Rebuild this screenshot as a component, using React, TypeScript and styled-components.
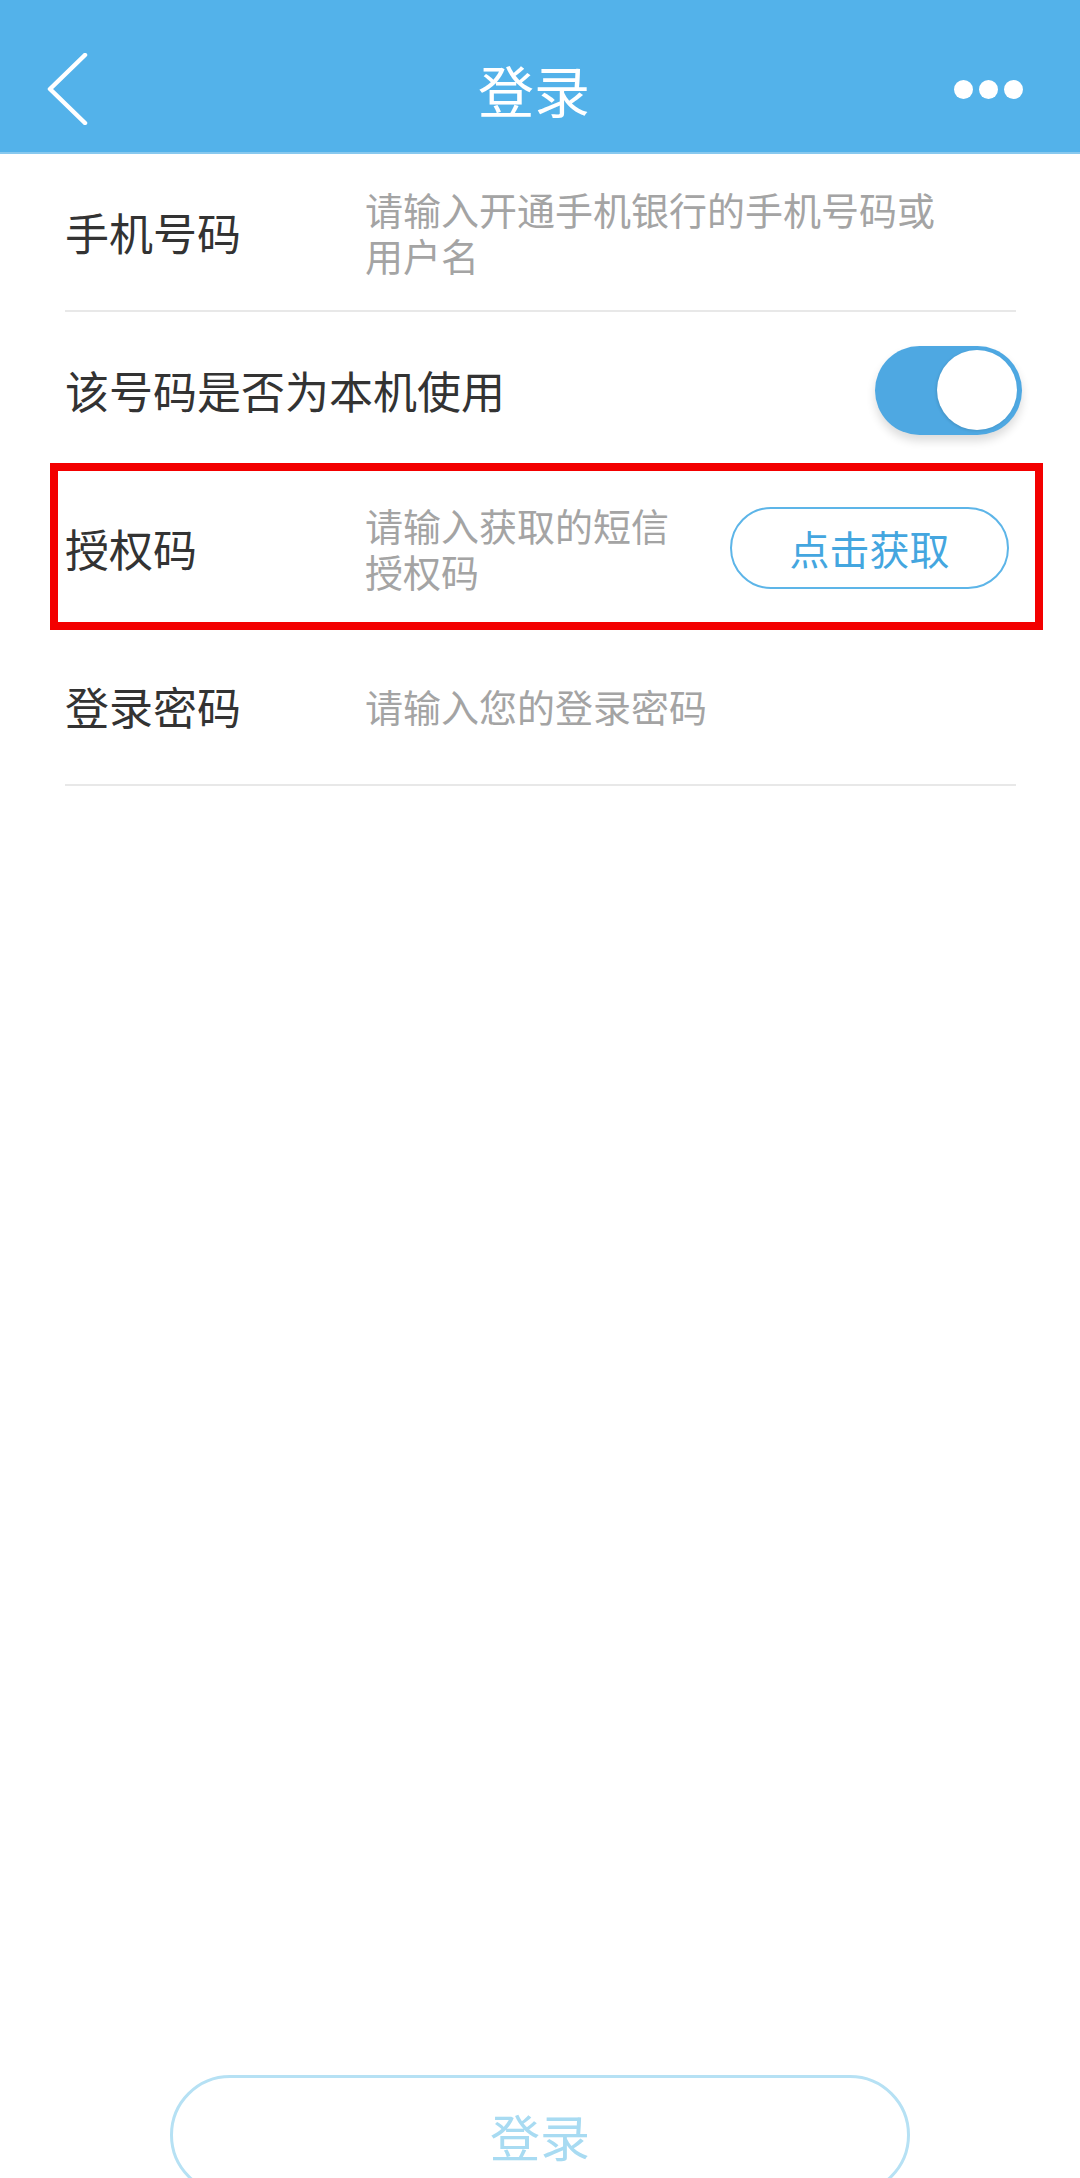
import styled, { createGlobalStyle } from 'styled-components';

const GlobalStyle = createGlobalStyle`
  html, body {
    margin: 0;
    padding: 0;
    background: #ffffff;
    overflow: hidden;
  }
  body {
    font-family: "Noto Sans CJK SC", "Noto Sans", sans-serif;
  }
`;

const Page = styled.div`
  width: 1080px;
  height: 2178px;
  display: flex;
  flex-direction: column;
  background: #ffffff;
  overflow: hidden;
`;

const Header = styled.header`
  flex-shrink: 0;
  height: 154px;
  box-sizing: border-box;
  padding: 26px 57px 0 45px;
  background: #53b2ea;
  border-bottom: 2px solid #88c9ef;
  display: grid;
  grid-template-columns: 120px 1fr 120px;
  align-items: center;
`;

const BackButton = styled.div`
  display: flex;
  align-items: center;
`;

const Title = styled.h1`
  margin: 0;
  text-align: center;
  color: #ffffff;
  font-size: 56px;
  font-weight: 400;
  line-height: 1;
`;

const Dots = styled.div`
  display: flex;
  justify-content: flex-end;
  gap: 6px;

  span {
    width: 19px;
    height: 19px;
    border-radius: 50%;
    background: #ffffff;
  }
`;

const Form = styled.div`
  flex-shrink: 0;
  display: flex;
  flex-direction: column;
`;

const Row = styled.div`
  position: relative;
  flex-shrink: 0;
  height: 158px;
  box-sizing: border-box;
  margin: 0 64px 0 65px;
  border-bottom: 2px solid #e8e8e8;
  display: flex;
  align-items: center;
`;

const Label = styled.div`
  min-width: 300px;
  flex-shrink: 0;
  white-space: nowrap;
  font-size: 44px;
  color: #333333;
  line-height: 1.2;
`;

const Hint = styled.div<{ $width?: number }>`
  width: ${(p) => (p.$width ? `${p.$width}px` : 'auto')};
  font-size: 38px;
  line-height: 46px;
  color: #a4a4a4;
`;

const Switch = styled.div`
  margin-left: auto;
  margin-right: -6px;
  width: 147px;
  height: 89px;
  flex-shrink: 0;
  box-sizing: border-box;
  padding: 0 5px;
  border-radius: 45px;
  background: #4ea8e2;
  box-shadow: 0 6px 10px rgba(0, 0, 0, 0.14);
  display: flex;
  align-items: center;
  justify-content: flex-end;
`;

const Knob = styled.div`
  width: 80px;
  height: 80px;
  border-radius: 50%;
  background: #ffffff;
  box-shadow: -1px 1px 3px rgba(0, 0, 0, 0.12);
`;

const FetchButton = styled.button`
  margin-left: auto;
  margin-right: 7px;
  width: 279px;
  height: 82px;
  flex-shrink: 0;
  border: 2.5px solid #5db5e8;
  border-radius: 41px;
  background: #ffffff;
  color: #44a6df;
  font-family: inherit;
  font-size: 40px;
  padding: 0;
`;

const Highlight = styled.div`
  position: absolute;
  top: -7px;
  bottom: -4px;
  left: -15px;
  right: -27px;
  border: 8px solid #f30000;
  pointer-events: none;
`;

const LoginButton = styled.button`
  margin: 1289px auto 0;
  width: 740px;
  height: 120px;
  flex-shrink: 0;
  border: 3px solid #b6e1f4;
  border-radius: 60px;
  background: #ffffff;
  color: #a8dbf2;
  font-family: inherit;
  font-size: 50px;
  padding: 0;
`;

const App = () => {
  return (
    <Page>
      <GlobalStyle />
      <Header>
        <BackButton>
          <svg width="44" height="72" viewBox="0 0 44 72" fill="none">
            <path d="M40 2 L5 36 L40 70" stroke="#ffffff" strokeWidth="4.5" strokeLinecap="round" strokeLinejoin="round" />
          </svg>
        </BackButton>
        <Title>登录</Title>
        <Dots>
          <span />
          <span />
          <span />
        </Dots>
      </Header>
      <Form>
        <Row>
          <Label>手机号码</Label>
          <Hint $width={590}>请输入开通手机银行的手机号码或用户名</Hint>
        </Row>
        <Row>
          <Label>该号码是否为本机使用</Label>
          <Switch>
            <Knob />
          </Switch>
        </Row>
        <Row>
          <Label>授权码</Label>
          <Hint $width={325}>请输入获取的短信授权码</Hint>
          <FetchButton>点击获取</FetchButton>
          <Highlight />
        </Row>
        <Row>
          <Label>登录密码</Label>
          <Hint>请输入您的登录密码</Hint>
        </Row>
      </Form>
      <LoginButton>登录</LoginButton>
    </Page>
  );
};

export default App;
